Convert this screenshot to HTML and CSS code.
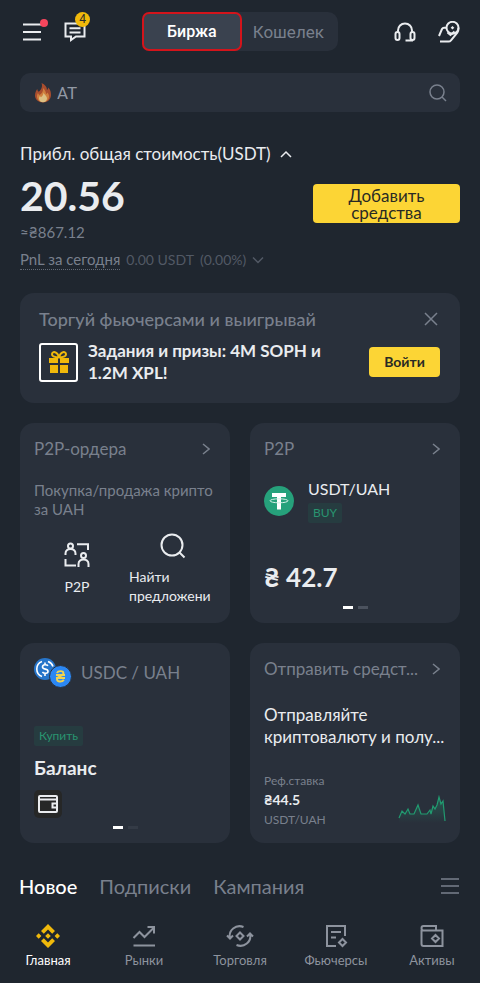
FILE: index.html
```html
<!DOCTYPE html>
<html lang="ru">
<head>
<meta charset="utf-8">
<meta name="viewport" content="width=device-width, initial-scale=1">
<title>Биржа</title>
<link rel="stylesheet" href="styles.css">
</head>
<body>
<div class="app">
  <header class="topbar">
    <div class="topbar-side">
      <button class="icon-btn" aria-label="Меню">
        <svg width="20" height="20" viewBox="0 0 20 20" class="line"><path d="M1 2.5h18M1 10h18M1 17.5h18"/></svg>
        <span class="dot"></span>
      </button>
      <button class="icon-btn" aria-label="Сообщения">
        <svg width="22" height="22" viewBox="0 0 22 22" class="line"><path d="M1.500 2.500h19v13h-8.500l-5 3.500v-3.500H1.500zM5.500 7.200h11M5.500 11.500h11"/></svg>
        <span class="badge">4</span>
      </button>
    </div>
    <div class="switch">
      <button class="switch-item active">Биржа</button>
      <button class="switch-item">Кошелек</button>
    </div>
    <div class="topbar-side end">
      <button class="icon-btn" aria-label="Поддержка">
        <svg width="22" height="22" viewBox="0 0 22 22" class="line"><path d="M4 11V9.500C4 5.500 7 2.500 11 2.500s7 3 7 7V11M11.500 19.500H18V18"/><rect x="1.500" y="11" width="4" height="8" rx="2"/><rect x="16.500" y="11" width="4" height="8" rx="2"/></svg>
      </button>
      <button class="icon-btn" aria-label="Вознаграждения">
        <svg width="22" height="22" viewBox="0 0 22 22" class="line"><path d="M1 15l3-7q.6-1.200 2-1.200h2.500M2 20.500h8.500q1.500 0 2.500-1.200l6.500-8q1-1.500 1-4.500"/><circle cx="14.500" cy="6.800" r="6"/><path d="M9.500 11.500l3 2.500 4-3.500"/><path d="M14.500 5l1.800 1.800-1.800 1.800-1.800-1.800z" class="solid"/></svg>
      </button>
    </div>
  </header>

  <label class="search">
    <svg width="18" height="20" viewBox="0 0 18 20"><path fill="#a84d2e" d="M7.500 0c3.500 1.500 5.500 4 5.500 7 .8-.6 1.200-1.500 1.200-2.500C16.500 6.500 17 9.500 17 12c0 4.500-3.500 7.500-8 7.500S1 16.500 1 12.500C1 9.500 2.200 7.500 3.200 6c.2 1.300.7 2.200 1.500 2.800C7.500 6.500 8.800 3.500 7.500 0z"/><path fill="#cf7f3e" d="M9 5c2 2 3 4 3 6 .8-.3 1.200-.8 1.500-1.500 1.200 1.500 1.700 3 1.500 4.500-.3 3.200-3 5-6 5s-5.700-2-6-5c-.1-1.500.3-3 1-4 .3 1 .8 1.500 1.500 2C8 10.500 9.500 8 9 5z"/><path fill="#dcc083" d="M9.500 9.500c.5 2 3.500 3.200 3.500 6 0 2.200-1.800 3.700-4 3.700s-4-1.500-4-3.700c0-1 .3-1.800.8-2.500l1.200 1.200c1.500-1 2.500-2.700 2.500-4.700z"/></svg>
    <input type="search" placeholder="AT" aria-label="Поиск">
    <svg width="18" height="18" viewBox="0 0 18 18" class="line thin"><circle cx="8" cy="8" r="7"/><path d="M13 13l4 4"/></svg>
  </label>

  <section class="balance">
    <h1>Прибл. общая стоимость(USDT)
      <svg width="12" height="8" viewBox="0 0 12 8" class="line thin"><path d="M1 7l5-5 5 5"/></svg></h1>
    <div class="balance-row">
      <div>
        <div class="amount">20.56</div>
        <div class="fiat">≈₴867.12</div>
      </div>
      <button class="primary deposit">Добавить средства</button>
    </div>
    <div class="pnl"><span class="pnl-label">PnL за сегодня</span><span>0.00 USDT</span><span>(0.00%)</span>
      <svg width="12" height="8" viewBox="0 0 12 8" class="line thin"><path d="M1 1.500l5 5 5-5"/></svg></div>
  </section>

  <section class="promo">
    <div class="card-head"><h2>Торгуй фьючерсами и выигрывай</h2>
      <button class="icon-btn" aria-label="Закрыть"><svg width="14" height="14" viewBox="0 0 14 14" class="line thin"><path d="M1 1l12 12M13 1L1 13"/></svg></button></div>
    <div class="promo-body">
      <span class="gift"><svg width="20" height="22" viewBox="0 0 20 22"><path fill="#f0b90b" d="M0 7h9v5H0zM11 7h9v5h-9zM1 14h8v8H1zM11 14h8v8h-8z"/><path fill="none" stroke="#f0b90b" stroke-width="2" d="M10 6.500C8.500 0 3 0 3 3.300q0 3 7 3.200zM10 6.500C11.500 0 17 0 17 3.300q0 3-7 3.200z"/></svg></span>
      <p>Задания и призы: 4M SOPH и 1.2M XPL!</p>
      <button class="primary enter">Войти</button>
    </div>
  </section>

  <main class="cards">
    <article class="card">
      <div class="card-head"><h2>P2P-ордера</h2><svg width="8" height="12" viewBox="0 0 8 12" class="line thin"><path d="M1 1l6 5-6 5"/></svg></div>
      <p class="note">Покупка/продажа крипто за UAH</p>
      <div class="actions">
        <a href="#p2p" class="action"><svg width="26" height="26" viewBox="0 0 26 26" class="line"><circle cx="6.500" cy="4" r="2.500"/><path d="M1.500 13v-1.500c0-6 10-6 10 0V13M13 2.200h11V8M1.500 17v6.500h10.500"/><circle cx="19.500" cy="13.500" r="2.500"/><path d="M14.500 25v-3c0-6 10-6 10 0v3"/></svg>P2P</a>
        <a href="#offers" class="action find"><svg width="26" height="26" viewBox="0 0 26 26" class="line"><circle cx="12" cy="12" r="10.500"/><path d="M19.500 19.500l5 5"/></svg><span>Найти предложени</span></a>
      </div>
    </article>

    <article class="card">
      <div class="card-head"><h2>P2P</h2><svg width="8" height="12" viewBox="0 0 8 12" class="line thin"><path d="M1 1l6 5-6 5"/></svg></div>
      <div class="pair">
        <svg width="30" height="30" viewBox="0 0 30 30"><circle cx="15" cy="15" r="15" fill="#26a17b"/><path fill="#fff" d="M8 7h14v4h-5v12.500h-4V11H8z"/><ellipse cx="15" cy="14.800" rx="9" ry="2" fill="none" stroke="#d7f0e7"/></svg>
        <div><div class="pair-name">USDT/UAH</div><span class="tag">BUY</span></div>
      </div>
      <div class="price">₴ 42.7</div>
      <div class="pager"><i class="on"></i><i></i></div>
    </article>

    <article class="card">
      <div class="card-head coins">
        <svg width="38" height="30" viewBox="0 0 38 30"><circle cx="11" cy="11" r="11" fill="#2775ca"/><path d="M8 3.500a8 8 0 0 0 0 15M14 3.500a8 8 0 0 1 5 5M14 7.800C12.500 6 8.500 6.500 8.500 8.900c0 3 5.500 1.500 5.500 4.300 0 2.500-4 2.800-5.600.8M11 4.500v3M11 15v3" fill="none" stroke="#fff" stroke-width="1.600"/><circle cx="26.500" cy="18.500" r="11" fill="#2b87f3" stroke="#29303b"/><path d="M23 15c1-2.500 6.500-2.500 6.500.2 0 3-6.500 3-6.500 6 0 3 5.500 3 6.800.5M22 17h9M22 20h9" fill="none" stroke="#f1d34f" stroke-width="1.900"/></svg>
        <h2>USDC / UAH</h2>
      </div>
      <span class="tag buy">Купить</span>
      <div class="wallet-title">Баланс</div>
      <span class="wallet"><svg width="20" height="18" viewBox="0 0 20 18" class="line"><rect x="1" y="1" width="18" height="16" rx="1"/><path d="M1 4.500h18M19 8.500h-4.500v4H19"/></svg></span>
      <div class="pager dim"><i class="on"></i><i></i></div>
    </article>

    <article class="card">
      <div class="card-head"><h2>Отправить средст...</h2><svg width="8" height="12" viewBox="0 0 8 12" class="line thin"><path d="M1 1l6 5-6 5"/></svg></div>
      <p class="send">Отправляйте<span>криптовалюту и полу...</span></p>
      <div class="rate">
        <div><div>Реф.ставка</div><strong>₴44.5</strong><div>USDT/UAH</div></div>
        <svg width="48" height="28" viewBox="0 0 48 28"><defs><linearGradient id="fade" x2="0" y2="1"><stop stop-color="#22a375" stop-opacity=".35"/><stop offset="1" stop-color="#22a375" stop-opacity="0"/></linearGradient></defs><path fill="url(#fade)" d="M1 23L4 16l3 3 3-5 2 5h4l4-9 3 9h6l3-4 1 4 2-8 2 3 2-4 2-8 2 7 2-3 2 22H1z"/><path fill="none" stroke="#219b70" stroke-width="1.200" d="M1 23L4 16l3 3 3-5 2 5h4l4-9 3 9h6l3-4 1 4 2-8 2 3 2-4 2-8 2 7 2-3 2 20"/></svg>
      </div>
    </article>
  </main>

  <nav class="tabs">
    <a href="#new" class="active">Новое</a><a href="#subs">Подписки</a><a href="#campaign">Кампания</a>
    <button class="icon-btn" aria-label="Список"><svg width="20" height="18" viewBox="0 0 20 18" class="line thin"><path d="M1 2h18M1 9h18M1 16h18"/></svg></button>
  </nav>

  <nav class="bottom">
    <a href="#home" class="active"><svg width="24" height="24" viewBox="0 0 24 24" fill="#f0b90b"><path d="M12 0l7 7-2.800 2.800L12 5.600 7.800 9.800 5 7zM12 24l7-7-2.800-2.800L12 18.400l-4.200-4.200L5 17zM0 12l2.700-2.700L5.400 12l-2.700 2.700zM18.600 12l2.700-2.700L24 12l-2.700 2.700zM9.200 12L12 9.200l2.800 2.800-2.800 2.800z"/></svg>Главная</a>
    <a href="#markets"><svg width="24" height="24" viewBox="0 0 24 24" class="line"><path d="M1.500 14l6-6 5 5L22 3.500M15.500 3H22v6.500M1.500 21.500H23"/></svg>Рынки</a>
    <a href="#trade"><svg width="28" height="24" viewBox="0 0 28 24" class="line"><path d="M4 14.500C2 6 10 0 17.500 3M24 9.500C26 18 18 24 10.500 21M1 11.500l3 3 3-3M21 12.500l3-3 3 3M14 8.500l3.500 3.500-3.500 3.500-3.500-3.500z"/></svg>Торговля</a>
    <a href="#futures"><svg width="24" height="24" viewBox="0 0 24 24" class="line"><path d="M12 22H3V2h18v10M7 8h10M7 13.500h5M18.500 15l3.500 3.500-3.500 3.500-3.500-3.500z"/></svg>Фьючерсы</a>
    <a href="#assets"><svg width="24" height="24" viewBox="0 0 24 24" class="line"><path d="M1.500 6v14q0 2 2 2h19V6.500H3.500q-2 0-2-2.200 0-2.300 2-2.300H16v4.500M15.500 11l3.500 3.500-3.500 3.500-3.500-3.500z"/></svg>Активы</a>
  </nav>
</div>
</body>
</html>
```
FILE: styles.css
```css
:root {
  --bg: #1f262f;
  --panel: #29303b;
  --text: #eaecef;
  --muted: #79808d;
  --yellow: #fcd535;
}
* { box-sizing: border-box; }
body {
  margin: 0;
  background: var(--bg);
  color: var(--text);
  font: 16px/22px Lato, "Noto Sans", sans-serif;
}
h1, h2, p { margin: 0; font-weight: 400; }
a { color: inherit; text-decoration: none; }
button {
  border: 0;
  padding: 0;
  background: none;
  color: inherit;
  font: inherit;
}
svg { flex: none; display: block; }
.line { fill: none; stroke: currentColor; stroke-width: 2; }
.thin { stroke-width: 1.5; }
.line .solid { fill: currentColor; stroke: none; }
.app { padding: 12px 20px 16px; }

.topbar {
  display: grid;
  grid-template-columns: 1fr auto 1fr;
  align-items: center;
}
.topbar-side { display: flex; align-items: center; gap: 22px; padding-left: 2px; }
.topbar-side.end { justify-content: flex-end; padding: 0; }
.icon-btn { position: relative; display: flex; }
.dot {
  position: absolute;
  top: -3px;
  right: -6px;
  width: 8px;
  height: 8px;
  border-radius: 50%;
  background: #f6465d;
}
.badge {
  position: absolute;
  top: -9px;
  right: -4px;
  width: 15px;
  height: 15px;
  border-radius: 50%;
  background: #f0b90b;
  color: #292c2c;
  font: 12px/15px Roboto, sans-serif;
  text-align: center;
}
.switch { display: flex; border-radius: 10px; background: var(--panel); }
.switch-item {
  height: 39px;
  padding: 0 14px 0 11px;
  color: var(--muted);
  font: 17px/22px Roboto, sans-serif;
}
.switch-item.active {
  padding: 0 23px;
  border: 2px solid #d3141b;
  border-radius: 7px;
  background: #3a424f;
  color: #fff;
  font-size: 16px;
  font-weight: 500;
}

.search {
  display: flex;
  align-items: center;
  gap: 5px;
  height: 39px;
  margin-top: 22px;
  padding: 0 13px 0 14px;
  border-radius: 10px;
  background: var(--panel);
  color: var(--muted);
}
.search input {
  flex: 1;
  min-width: 0;
  padding: 0;
  border: 0;
  outline: 0;
  background: none;
  color: inherit;
  font: 17px/20px Roboto, sans-serif;
}
.search input::placeholder { color: #9299a5; }

.balance { margin-top: 31px; }
.balance h1 { display: flex; align-items: center; gap: 9px; font-size: 17px; }
.balance-row { display: flex; justify-content: space-between; align-items: flex-start; margin-top: 11px; }
.amount { font-size: 41px; line-height: 40px; font-weight: 700; }
.primary { border-radius: 4px; background: var(--yellow); color: #292a24; }
.deposit { width: 147px; height: 39px; margin-top: 8px; padding: 0 24px; font-size: 17px; line-height: 17px; }
.fiat { margin-top: 5px; color: var(--muted); font-size: 15px; }
.pnl { display: flex; align-items: center; gap: 6px; margin-top: 6px; color: #525965; font-size: 14px; line-height: 20px; }
.pnl-label { border-bottom: 1px dotted #626975; color: var(--muted); font-size: 15px; }

.promo, .card { border-radius: 14px; background: var(--panel); }
.promo { margin-top: 23px; padding: 15px 20px 19px 19px; }
.card-head { display: flex; align-items: center; justify-content: space-between; color: var(--muted); }
.card-head h2 { white-space: nowrap; font-size: 17px; }
.promo h2 { font-size: 18px; font-weight: 500; }
.promo .icon-btn { padding: 0 2px; }
.promo-body { display: flex; align-items: center; gap: 10px; margin-top: 10px; }
.promo-body p { flex: 1; font-size: 17px; font-weight: 700; }
.gift { display: grid; place-items: center; width: 39px; height: 39px; border: 2px solid #fff; border-radius: 3px; }
.enter { width: 71px; height: 30px; font-size: 14px; font-weight: 700; }

.cards { display: grid; grid-template-columns: 1fr 1fr; gap: 20px; margin-top: 20px; }
.card { display: flex; flex-direction: column; min-width: 0; min-height: 200px; padding: 15px 14px 14px; }
.card .card-head { padding-right: 6px; gap: 4px; }
.note { margin-top: 21px; color: var(--muted); font-size: 15px; line-height: 19px; }
.actions { display: grid; grid-template-columns: 86px 1fr; align-items: center; gap: 9px; margin-top: 14px; font-size: 14px; line-height: 19px; }
.action { display: flex; flex-direction: column; align-items: center; gap: 9px; }
.action.find { gap: 8px; }
.pair { display: flex; align-items: center; gap: 14px; margin-top: 18px; }
.pair-name { font-size: 16px; }
.tag { display: inline-block; padding: 0 5px; border-radius: 2px; background: #263c40; color: #299570; font-size: 12px; line-height: 20px; }
.price { margin-top: 38px; font-size: 26px; line-height: 32px; font-weight: 700; }
.pager { display: flex; justify-content: center; gap: 5px; margin-top: auto; }
.pager i { width: 10px; height: 3px; background: #4b525e; }
.pager i.on { background: #fff; }
.pager.dim i:last-child { background: #343b46; }
.card .coins { justify-content: flex-start; gap: 9px; }
.buy { align-self: flex-start; margin-top: 38px; }
.wallet-title { margin-top: 11px; font-size: 19px; font-weight: 700; }
.wallet { display: grid; place-items: center; width: 28px; height: 28px; margin-top: 11px; border-radius: 5px; background: #262727; }
.send { margin-top: 24px; font-size: 17px; }
.send span { display: block; white-space: nowrap; }
.rate { display: flex; align-items: flex-end; justify-content: space-between; margin-top: auto; color: var(--muted); font-size: 12px; line-height: 19px; }
.rate strong { color: var(--text); font-size: 14px; }
.rate svg { margin-bottom: 6px; }

.tabs { display: flex; align-items: center; gap: 22px; margin: 31px 0 0 -1px; color: var(--muted); font-size: 20px; line-height: 24px; }
.tabs .active { color: #fff; font-weight: 500; }
.tabs .icon-btn { margin-left: auto; }
.bottom { display: grid; grid-template-columns: repeat(5, 1fr); margin: 26px -20px 0; color: #8d939e; font-size: 13px; line-height: 16px; }
.bottom a { display: flex; flex-direction: column; align-items: center; gap: 4px; }
.bottom .active { color: #fff; }
```
